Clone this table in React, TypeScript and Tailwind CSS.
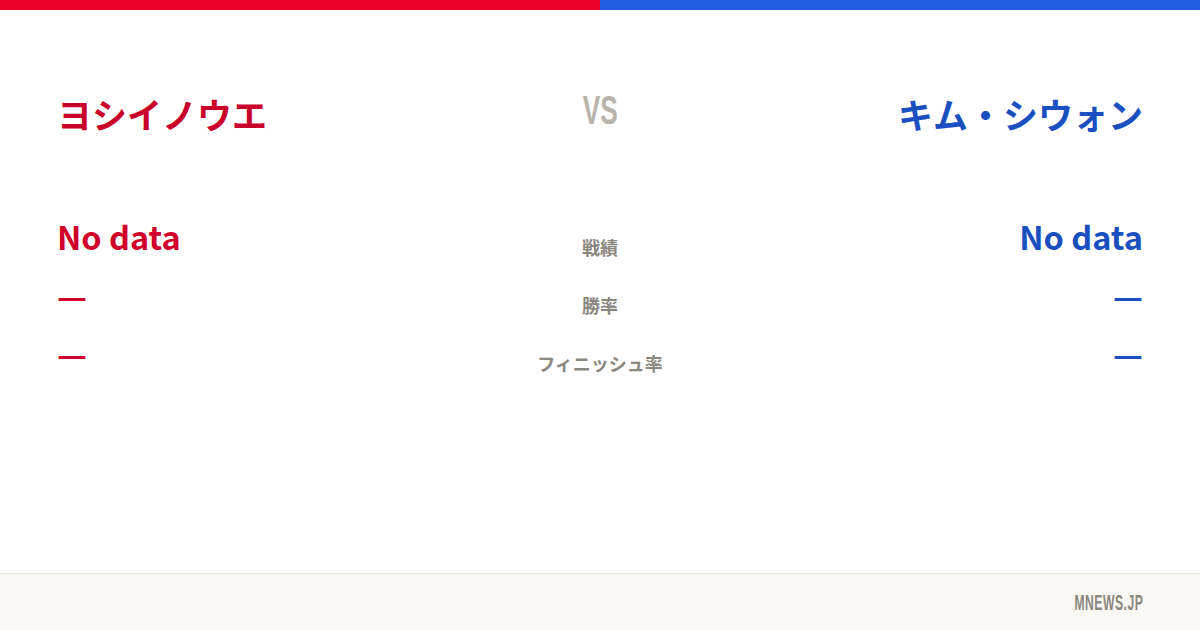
const jp = "font-['Noto_Sans_CJK_JP','Noto_Sans',sans-serif]";

function Values({ color, align }: { color: string; align: string }) {
  return (
    <div className={`flex flex-col ${align} ${color}`}>
      <div className="text-[32.5px] font-bold leading-[44px]">No data</div>
      <div className="mt-[8px] flex h-[58px] items-center">
        <span className="text-[33px] font-bold leading-none">—</span>
      </div>
      <div className="flex h-[58px] items-center">
        <span className="text-[33px] font-bold leading-none">—</span>
      </div>
    </div>
  );
}

export default function App() {
  return (
    <div className={`flex h-[630px] w-[1200px] flex-col bg-white ${jp}`}>
      <div className="flex h-[10px]">
        <div className="flex-1 bg-[#e8002a]" />
        <div className="flex-1 bg-[#1f5fe0]" />
      </div>

      <main className="flex-1 px-[57px]">
        <div className="grid grid-cols-[1fr_auto_1fr] items-start pt-[74px]">
          <h1 className="text-[35px] font-bold leading-[60px] text-[#c8002a]">ヨシイノウエ</h1>
          <div className="origin-center -translate-y-[2px] scale-x-[0.64] font-['Liberation_Sans',sans-serif] text-[41px] font-bold leading-[56px] text-[#b8b4ab]">
            VS
          </div>
          <h1 className="text-right text-[35px] font-bold leading-[60px] text-[#1a4fc0]">キム・シウォン</h1>
        </div>

        <div className="mt-[70px] grid grid-cols-[1fr_auto_1fr]">
          <Values color="text-[#d0002a]" align="items-start" />
          <div className="flex flex-col items-center pt-[4px] text-[18px] font-bold text-[#8a877f]">
            <div className="flex h-[58px] items-center">戦績</div>
            <div className="flex h-[58px] items-center">勝率</div>
            <div className="flex h-[58px] items-center">フィニッシュ率</div>
          </div>
          <Values color="text-[#1a4fc0]" align="items-end" />
        </div>
      </main>

      <footer className="flex h-[57px] items-center justify-end border-t border-[#e8e6e0] bg-[#f9f8f4] px-[57px]">
        <span className="origin-right scale-x-[0.55] font-['Liberation_Sans',sans-serif] text-[22px] font-bold tracking-[1px] text-[#8a877f]">
          MNEWS.JP
        </span>
      </footer>
    </div>
  );
}
